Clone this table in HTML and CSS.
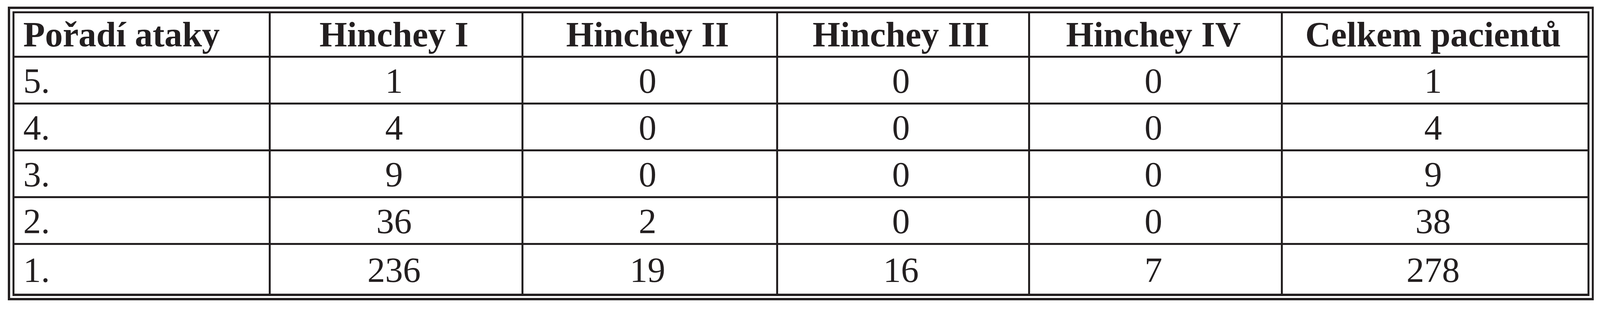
FILE: index.html
```html
<!DOCTYPE html>
<html lang="cs">
<head>
<meta charset="utf-8">
<title>Pořadí ataky – Hinchey</title>
<link rel="stylesheet" href="styles.css">
</head>
<body>
<div class="frame">
  <div class="grid">
    <div class="cell head first">Pořadí ataky</div>
    <div class="cell head">Hinchey I</div>
    <div class="cell head">Hinchey II</div>
    <div class="cell head">Hinchey III</div>
    <div class="cell head">Hinchey IV</div>
    <div class="cell head">Celkem pacientů</div>

    <div class="cell first">5.</div>
    <div class="cell">1</div>
    <div class="cell">0</div>
    <div class="cell">0</div>
    <div class="cell">0</div>
    <div class="cell">1</div>

    <div class="cell first">4.</div>
    <div class="cell">4</div>
    <div class="cell">0</div>
    <div class="cell">0</div>
    <div class="cell">0</div>
    <div class="cell">4</div>

    <div class="cell first">3.</div>
    <div class="cell">9</div>
    <div class="cell">0</div>
    <div class="cell">0</div>
    <div class="cell">0</div>
    <div class="cell">9</div>

    <div class="cell first">2.</div>
    <div class="cell">36</div>
    <div class="cell">2</div>
    <div class="cell">0</div>
    <div class="cell">0</div>
    <div class="cell">38</div>

    <div class="cell first">1.</div>
    <div class="cell">236</div>
    <div class="cell">19</div>
    <div class="cell">16</div>
    <div class="cell">7</div>
    <div class="cell">278</div>
  </div>
</div>
</body>
</html>
```

FILE: styles.css
```css
html, body {
  background: #ffffff;
}

body {
  margin: 17px 0 0 0.49vw;
  font-family: "Liberation Serif", "Times New Roman", serif;
  color: #231f20;
  overflow: hidden;
}

.frame {
  box-sizing: border-box;
  width: 99.13vw;
  border-style: solid;
  border-color: #231f20;
  border-width: 6px 5px 6px 6px;
  padding: 6px 6px 5px 6px;
  background: #ffffff;
}

.grid {
  display: grid;
  grid-template-columns: 749fr 738fr 744fr 737fr 738fr 898fr;
  grid-template-rows: 109px 115px 115px 115px 115px 125px;
  gap: 5px;
  padding: 5px 5px 6px 5px;
  background: #231f20;
}

.cell {
  min-width: 0;
  background: #ffffff;
  display: flex;
  align-items: center;
  justify-content: center;
  font-size: 91px;
  line-height: 1;
  padding: 4px 0.26vw 0 0;
  white-space: nowrap;
}

.cell.head {
  font-weight: bold;
  padding-top: 0;
}

.cell.first {
  justify-content: flex-start;
  padding-left: 0.55vw;
  padding-right: 0;
}
```
